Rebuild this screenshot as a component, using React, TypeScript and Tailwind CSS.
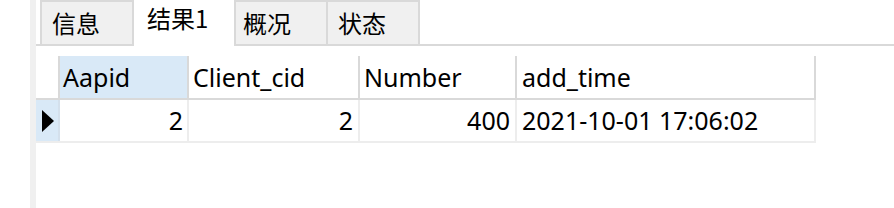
import React from "react";

const cjk = { fontFamily: '"Noto Sans CJK SC", "Noto Sans", sans-serif' };
const latin = { fontFamily: '"Noto Sans", "Noto Sans CJK SC", sans-serif' };

export default function App() {
  return (
    <div className="w-[894px] h-[208px] bg-white flex overflow-hidden text-black">
      <div className="w-[30px] shrink-0 bg-white" />
      <div className="w-[6px] shrink-0 bg-[#f0f0f0]" />
      <div className="flex-1 flex flex-col">
        {/* Tab bar */}
        <div
          className="h-[46px] flex items-start pl-[4px] border-b-2 border-[#d9d9d9] text-[24px] leading-[24px]"
          style={cjk}
        >
          <div className="w-[94px] h-[44px] bg-[#f0f0f0] border-2 border-b-0 border-[#d9d9d9] flex items-center pl-[10px]">
            信息
          </div>
          <div className="w-[100px] h-[46px] bg-white pl-[13px] pt-[6px]">结果1</div>
          <div className="w-[94px] h-[44px] bg-[#f0f0f0] border-2 border-b-0 border-[#d9d9d9] flex items-center pl-[7px]">
            概况
          </div>
          <div className="w-[94px] h-[44px] -ml-[2px] bg-[#f0f0f0] border-2 border-b-0 border-[#d9d9d9] flex items-center pl-[10px]">
            状态
          </div>
        </div>

        {/* Grid */}
        <div className="pt-[10px] text-[25px]" style={latin}>
          <div className="flex h-[44px] leading-[42px] border-b-2 border-[#d9d9d9] w-[780px]">
            <div className="w-[24px] border-r-2 border-[#d9d9d9] bg-white" />
            <div className="w-[129px] border-r-2 border-[#d9d9d9] bg-[#d9e9f7] pl-[3px]">Aapid</div>
            <div className="w-[171px] border-r-2 border-[#d9d9d9] pl-[4px]">Client_cid</div>
            <div className="w-[157px] border-r-2 border-[#d9d9d9] pl-[4px]">Number</div>
            <div className="w-[299px] border-r-2 border-[#d9d9d9] pl-[5px]">add_time</div>
          </div>
          <div className="flex h-[43px] leading-[41px] border-b-2 border-[#ededed] w-[780px]">
            <div className="w-[24px] border-r-2 border-[#d4e0ec] bg-[#d9e9f7] flex items-center pl-[6px]">
              <svg width="12" height="22" viewBox="0 0 12 22">
                <polygon points="0,0 12,11 0,22" fill="#000" />
              </svg>
            </div>
            <div className="w-[129px] border-r-2 border-[#ededed] text-right pr-[4px]">2</div>
            <div className="w-[171px] border-r-2 border-[#ededed] text-right pr-[5px]">2</div>
            <div className="w-[157px] border-r-2 border-[#ededed] text-right pr-[5px]">400</div>
            <div className="w-[299px] border-r-2 border-[#ededed] pl-[5px]">2021-10-01 17:06:02</div>
          </div>
        </div>
      </div>
    </div>
  );
}
